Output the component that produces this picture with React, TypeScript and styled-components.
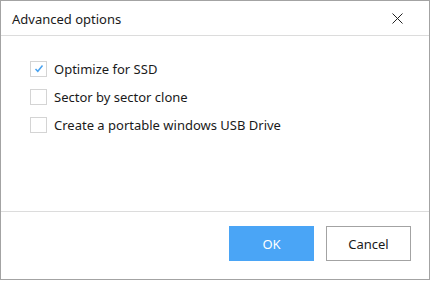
import React, { useState } from 'react';
import styled, { createGlobalStyle } from 'styled-components';

const GlobalStyle = createGlobalStyle`
    html, body {
        margin: 0;
        padding: 0;
        background: #ffffff;
    }
    * {
        box-sizing: border-box;
    }
`

const Window = styled.div`
    width: 430px;
    height: 280px;
    border: 1px solid #a3a3a3;
    background: #ffffff;
    display: flex;
    flex-direction: column;
    font-family: "Noto Sans", "Open Sans", sans-serif;
    color: #1a1a1a;
`

const Header = styled.div`
    height: 35px;
    flex-shrink: 0;
    display: flex;
    align-items: center;
    justify-content: space-between;
    padding: 0 26px 0 11px;
    border-bottom: 1px solid #dcdcdc;
`

const Title = styled.div`
    font-size: 13px;
    padding-top: 1px;
`

const CloseButton = styled.button`
    width: 12px;
    height: 12px;
    padding: 0;
    border: none;
    background: none;
    display: flex;
    align-items: center;
    justify-content: center;
    cursor: pointer;
`

const Body = styled.div`
    flex: 1;
    padding: 24px 29px;
    display: flex;
    flex-direction: column;
    gap: 11px;
`

const Option = styled.label`
    display: flex;
    align-items: center;
    gap: 7px;
    height: 17px;
    font-size: 13px;
    cursor: pointer;
`

const Box = styled.span`
    width: 17px;
    height: 16px;
    border: 1px solid #d4d4d4;
    background: #ffffff;
    display: flex;
    align-items: center;
    justify-content: center;
    flex-shrink: 0;
`

const Footer = styled.div`
    height: 68px;
    flex-shrink: 0;
    border-top: 1px solid #dcdcdc;
    display: flex;
    justify-content: flex-end;
    align-items: flex-start;
    gap: 12px;
    padding: 14px 18px 0 0;
`

const Button = styled.button<{ primary?: boolean }>`
    width: 85px;
    height: 35px;
    font-family: inherit;
    font-size: 13px;
    border: 1px solid ${(props) => (props.primary ? '#4aa5f6' : '#a3a3a3')};
    background: ${(props) => (props.primary ? '#4aa5f6' : '#ffffff')};
    color: ${(props) => (props.primary ? '#ffffff' : '#1a1a1a')};
    cursor: pointer;
`

const options = [
    'Optimize for SSD',
    'Sector by sector clone',
    'Create a portable windows USB Drive',
]

const App = () => {
    const [checked, setChecked] = useState([true, false, false]);
    const toggle = (i: number) => setChecked(prev => prev.map((v, j) => (j === i ? !v : v)));

    return (
        <>
            <GlobalStyle />
            <Window>
                <Header>
                    <Title>Advanced options</Title>
                    <CloseButton>
                        <svg width="11" height="11" viewBox="0 0 11 11">
                            <path d="M0.5 0.5 L10.5 10.5 M10.5 0.5 L0.5 10.5" stroke="#222" strokeWidth="1" />
                        </svg>
                    </CloseButton>
                </Header>
                <Body>
                    {options.map((text, i) =>
                        <Option key={text} onClick={() => toggle(i)}>
                            <Box>
                                {checked[i] &&
                                    <svg width="10" height="9" viewBox="0 0 10 9">
                                        <path d="M1.5 5 L3.8 7.3 L8.5 1.5" stroke="#4aa3f0" strokeWidth="1.5" fill="none" />
                                    </svg>}
                            </Box>
                            {text}
                        </Option>)}
                </Body>
                <Footer>
                    <Button primary>OK</Button>
                    <Button>Cancel</Button>
                </Footer>
            </Window>
        </>
    )
}

export default App;
